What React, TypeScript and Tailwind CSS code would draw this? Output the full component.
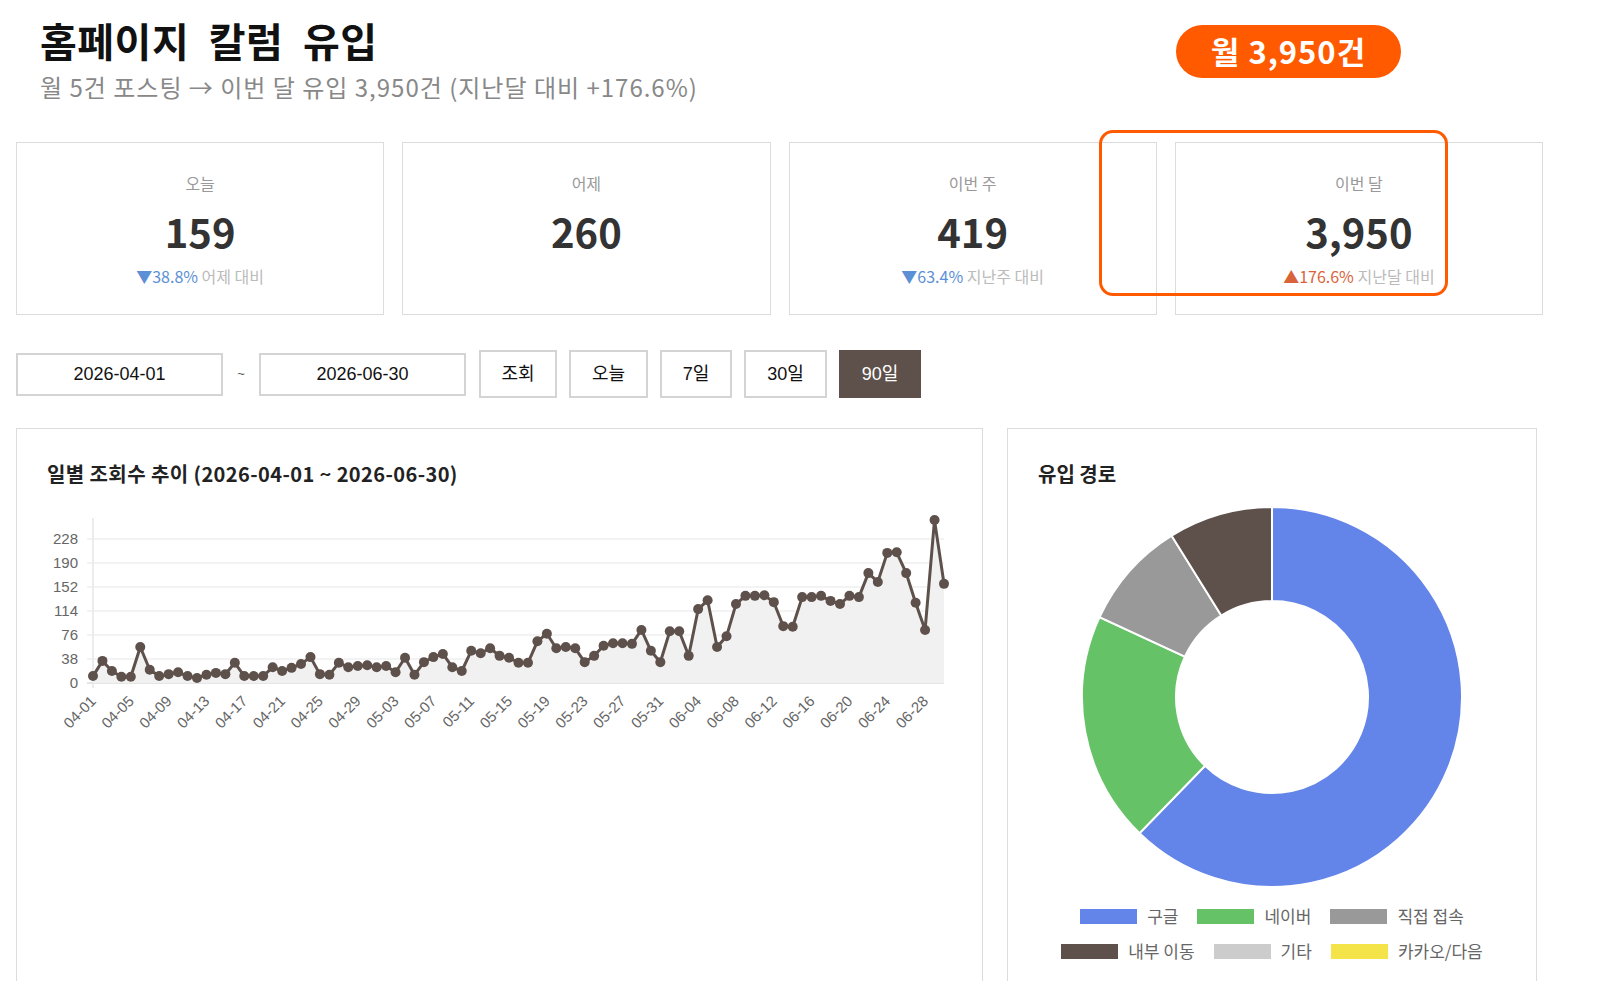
import React from 'react';

// 일별 조회수 (04-01 ~ 06-30)
const daily = [
  11, 35, 19, 10, 10, 57, 21, 11, 14, 17,
  11, 8, 13, 16, 14, 32, 11, 11, 11, 25,
  19, 24, 30, 41, 14, 13, 32, 25, 27, 28,
  25, 27, 17, 40, 13, 33, 41, 46, 25, 19,
  51, 47, 55, 43, 40, 32, 32, 66, 78, 55,
  57, 55, 33, 43, 59, 63, 63, 62, 84, 51,
  33, 82, 82, 43, 117, 131, 57, 74, 125, 138,
  138, 139, 128, 90, 89, 136, 136, 138, 130, 125,
  138, 136, 174, 160, 206, 207, 174, 127, 84, 258,
  157,
];

const dates: string[] = (() => {
  const out: string[] = [];
  const months: [string, number][] = [['04', 30], ['05', 31], ['06', 30]];
  months.forEach(([m, n]) => {
    for (let d = 1; d <= n; d++) out.push(`${m}-${String(d).padStart(2, '0')}`);
  });
  return out;
})();

const sources = [
  { label: '구글', value: 2460, color: '#6384e8' },
  { label: '네이버', value: 775, color: '#66c266' },
  { label: '직접 접속', value: 365, color: '#999999' },
  { label: '내부 이동', value: 350, color: '#5e514c' },
  { label: '기타', value: 0, color: '#cccccc' },
  { label: '카카오/다음', value: 0, color: '#f5e34a' },
];

const stats = [
  { label: '오늘', value: '159', diff: '▼38.8%', note: '어제 대비', up: false },
  { label: '어제', value: '260', diff: '', note: '', up: false },
  { label: '이번 주', value: '419', diff: '▼63.4%', note: '지난주 대비', up: false },
  { label: '이번 달', value: '3,950', diff: '▲176.6%', note: '지난달 대비', up: true },
];

const X0 = 93;
const X1 = 944;
const Y0 = 683;
const px = (i: number) => X0 + (i * (X1 - X0)) / (daily.length - 1);
const py = (v: number) => Y0 - (v * 24) / 38;

function LineChart() {
  const pts = daily.map((v, i) => `${px(i).toFixed(1)},${py(v).toFixed(1)}`).join(' ');
  const area = `${X0},${Y0} ${pts} ${X1},${Y0}`;
  const ticks = [0, 38, 76, 114, 152, 190, 228];
  return (
    <svg width="965" height="300" viewBox="17 500 965 300" className="block">
      {ticks.map((t) => (
        <g key={t}>
          <line x1={87} x2={X1} y1={py(t)} y2={py(t)} stroke={t === 0 ? '#dddddd' : '#efefef'} strokeWidth="1.5" />
          <text
            x={78}
            y={py(t) + 5}
            textAnchor="end"
            fontSize="15"
            fill="#666"
            fontFamily="'Liberation Sans', Arial, sans-serif"
          >
            {t}
          </text>
        </g>
      ))}
      <line x1={X0} x2={X0} y1={518} y2={688} stroke="#e6e6e6" strokeWidth="1.5" />
      <polygon points={area} fill="#f1f1f1" />
      <polyline points={pts} fill="none" stroke="#5e514c" strokeWidth="3" strokeLinejoin="round" />
      {daily.map((v, i) => (
        <circle key={i} cx={px(i)} cy={py(v)} r="5" fill="#5e514c" />
      ))}
      {dates.map((d, i) =>
        i % 4 === 0 ? (
          <text
            key={d}
            x={px(i) + 4}
            y={702}
            textAnchor="end"
            fontSize="15"
            fill="#666"
            fontFamily="'Liberation Sans', Arial, sans-serif"
            transform={`rotate(-45 ${px(i) + 4} 702)`}
          >
            {d}
          </text>
        ) : null,
      )}
    </svg>
  );
}

function Donut() {
  const cx = 264;
  const cy = 197;
  const R = 190;
  const r = 96;
  const total = sources.reduce((s, x) => s + x.value, 0);
  let acc = 0;
  const pt = (rad: number, a: number) => [cx + rad * Math.sin(a), cy - rad * Math.cos(a)];
  return (
    <svg width="528" height="394" className="block">
      {sources.map((s) => {
        if (!s.value) return null;
        const a0 = (acc / total) * Math.PI * 2;
        acc += s.value;
        const a1 = (acc / total) * Math.PI * 2;
        const large = a1 - a0 > Math.PI ? 1 : 0;
        const [ox0, oy0] = pt(R, a0);
        const [ox1, oy1] = pt(R, a1);
        const [ix1, iy1] = pt(r, a1);
        const [ix0, iy0] = pt(r, a0);
        const d = `M${ox0},${oy0} A${R},${R} 0 ${large} 1 ${ox1},${oy1} L${ix1},${iy1} A${r},${r} 0 ${large} 0 ${ix0},${iy0} Z`;
        return <path key={s.label} d={d} fill={s.color} stroke="#fff" strokeWidth="2" />;
      })}
    </svg>
  );
}

function LegendItem({ label, color }: { label: string; color: string }) {
  return (
    <div className="flex items-center gap-[10px]">
      <span className="block w-[57px] h-[15px]" style={{ backgroundColor: color }} />
      <span className="text-[17px] leading-[24px] text-[#666]">{label}</span>
    </div>
  );
}

export default function App() {
  return (
    <div className="relative w-full h-screen overflow-hidden bg-white text-[#222] [font-family:'Noto_Sans_CJK_KR','Noto_Sans',sans-serif]">
      {/* 헤더 */}
      <header className="flex items-start pl-[40px] pt-[16px]">
        <div>
          <h1 className="text-[40px] leading-[48px] font-bold text-[#111] tracking-[0.5px] [word-spacing:10px]">홈페이지 칼럼 유입</h1>
          <p className="mt-[7px] text-[24px] leading-[32px] text-[#888] tracking-[1px]">
            월 5건 포스팅 → 이번 달 유입 3,950건 (지난달 대비 +176.6%)
          </p>
        </div>
        <div className="ml-auto mr-[199px] mt-[9px] w-[225px] h-[53px] rounded-full bg-[#ff5a00] flex items-center justify-center text-white text-[31px] font-bold tracking-[1px]">
          월 3,950건
        </div>
      </header>

      {/* 요약 카드 */}
      <section className="ml-[16px] mt-[39px] w-[1527px] grid grid-cols-4 gap-[18px]">
        {stats.map((s) => (
          <div key={s.label} className="h-[173px] border border-[#dcdcdc] flex flex-col items-center pt-[28px]">
            <div className="text-[16px] leading-[24px] text-[#999]">{s.label}</div>
            <div className="mt-[12px] text-[40px] leading-[48px] font-bold text-[#333]">{s.value}</div>
            {s.diff && (
              <div className="mt-[10px] text-[16px] leading-[22px]">
                <span className={s.up ? 'text-[#d9643a]' : 'text-[#5b8fd6]'}>{s.diff}</span>{' '}
                <span className="text-[#bbb]">{s.note}</span>
              </div>
            )}
          </div>
        ))}
      </section>
      <div className="absolute left-[1099px] top-[130px] w-[349px] h-[166px] border-[3px] border-[#ff5a00] rounded-[14px] pointer-events-none" />

      {/* 기간 선택 */}
      <section className="ml-[16px] mt-[35px] flex items-center h-[48px] text-[18px] [font-family:'Liberation_Sans','Noto_Sans_CJK_KR',sans-serif]">
        <input
          readOnly
          value="2026-04-01"
          className="w-[207px] h-[43px] border-2 border-[#d4d4d4] text-center text-[18px] text-[#111] outline-none"
        />
        <span className="w-[36px] text-center text-[13px] text-[#555]">~</span>
        <input
          readOnly
          value="2026-06-30"
          className="w-[207px] h-[43px] border-2 border-[#d4d4d4] text-center text-[18px] text-[#111] outline-none"
        />
        <div className="ml-[13px] flex gap-[12px]">
          <button className="w-[78px] h-[48px] border-2 border-[#d4d4d4] bg-white text-[#111]">조회</button>
          <button className="w-[79px] h-[48px] border-2 border-[#d4d4d4] bg-white text-[#111]">오늘</button>
          <button className="w-[72px] h-[48px] border-2 border-[#d4d4d4] bg-white text-[#111]">7일</button>
          <button className="w-[83px] h-[48px] border-2 border-[#d4d4d4] bg-white text-[#111]">30일</button>
          <button className="w-[82px] h-[48px] border-2 border-[#5e514c] bg-[#5e514c] text-white">90일</button>
        </div>
      </section>

      {/* 차트 */}
      <section className="ml-[16px] mt-[30px] flex gap-[24px]">
        <div className="w-[967px] h-[600px] shrink-0 border border-[#dcdcdc]">
          <h2 className="pl-[30px] pt-[31px] text-[20px] leading-[28px] font-bold text-[#222] tracking-[0.4px]">
            일별 조회수 추이 (2026-04-01 ~ 2026-06-30)
          </h2>
          <div className="mt-[12px]">
            <LineChart />
          </div>
        </div>
        <div className="w-[530px] h-[600px] shrink-0 border border-[#dcdcdc]">
          <h2 className="pl-[30px] pt-[31px] text-[20px] leading-[28px] font-bold text-[#222]">유입 경로</h2>
          <div className="mt-[12px]">
            <Donut />
          </div>
          <div className="mt-[10px] flex flex-col items-center gap-[11px]">
            <div className="flex gap-[19px]">
              {sources.slice(0, 3).map((s) => (
                <LegendItem key={s.label} label={s.label} color={s.color} />
              ))}
            </div>
            <div className="flex gap-[19px]">
              {sources.slice(3).map((s) => (
                <LegendItem key={s.label} label={s.label} color={s.color} />
              ))}
            </div>
          </div>
        </div>
      </section>
    </div>
  );
}
